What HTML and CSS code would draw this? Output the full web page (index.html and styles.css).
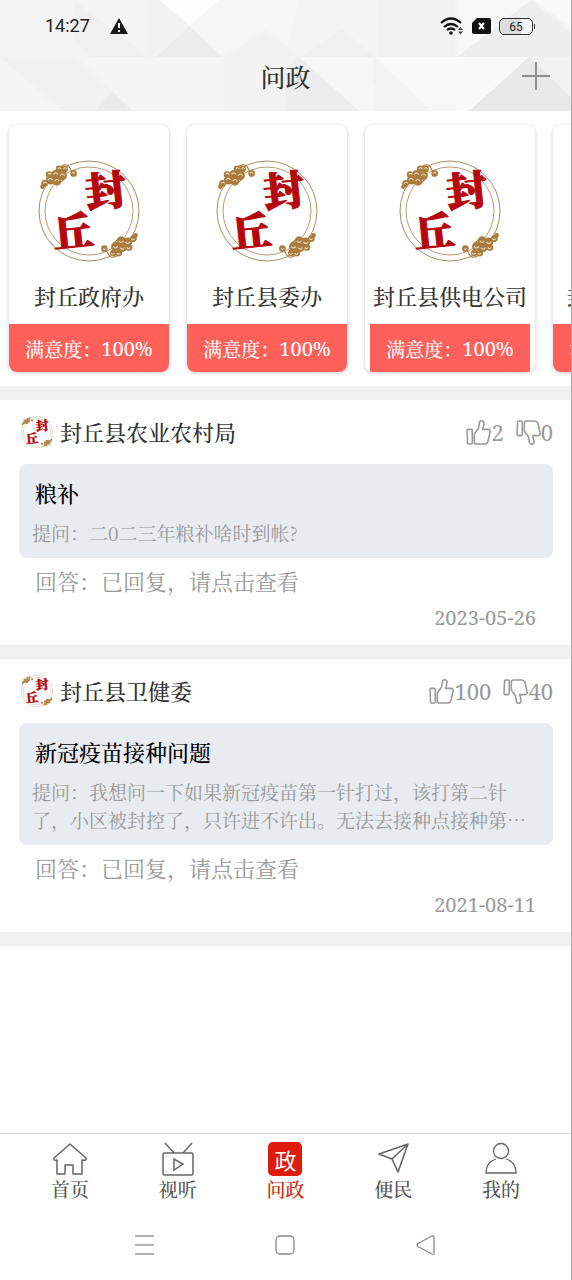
FILE: index.html
```html
<!DOCTYPE html>
<html lang="zh-CN">
<head>
<meta charset="utf-8">
<meta name="viewport" content="width=device-width, initial-scale=1">
<title>问政</title>
<link rel="stylesheet" href="styles.css">
</head>
<body>
<svg class="defs" aria-hidden="true">
  <symbol id="cloud" viewBox="0 0 34 26">
    <g fill="#aa7c3e">
      <circle cx="5" cy="21" r="3"/><circle cx="10" cy="18" r="4"/><circle cx="16" cy="19" r="4"/><circle cx="9" cy="13" r="3"/><circle cx="15" cy="13" r="4"/><circle cx="21" cy="14" r="4"/><circle cx="18" cy="8" r="3"/><circle cx="23" cy="8" r="3"/><circle cx="31" cy="12" r="3"/><circle cx="3" cy="24" r="2"/>
    </g>
    <path d="M19 6q7-5 10 4M4 21q5-4 10 0M9 14q5-3 8 3M17 10q4-3 7 2M12 21q8 1 12-6" fill="none" stroke="#aa7c3e" stroke-width="1"/>
    <path d="M4 21q1-2 3 0M8 18q2-3 4 0M14 19q2-3 4 0M8 13q1-2 3 0M13 13q2-3 4 0M19 14q2-3 4 0M17 8q1-2 3 0M22 8q1-2 3 0M30 12q1-2 2 0" fill="none" stroke="#ead9b8" stroke-width="1"/>
  </symbol>
  <symbol id="logo" viewBox="0 0 102 102">
    <circle cx="51" cy="51" r="50" fill="none" stroke="#a98c60" stroke-width="1"/>
    <circle cx="51" cy="51" r="44" fill="none" stroke="#b59b73" stroke-width="1"/>
    <use href="#cloud" x="0" y="0" width="40" height="29"/>
    <use href="#cloud" x="0" y="0" width="40" height="29" transform="rotate(180 51 51)"/>
    <g class="logo-text">
      <text x="47" y="46" transform="rotate(-6 67 31)">封</text>
      <text x="14" y="87" transform="rotate(-6 36 70)">丘</text>
    </g>
  </symbol>
  <symbol id="up" viewBox="0 0 24 24">
    <path d="M1 10q0-1 1-1h3q1 0 1 1v12q0 1-1 1H2.500q-1 0-1-1zM9 12l3-4 1-6q1-2 3-1 2 1 1 4l-1 4h5q3 0 2 3l-2 9q-1 2-3 2h-8q-2 0-2-2v-7q0-1 1-2z" fill="none" stroke="currentColor" stroke-width="1.500" stroke-linejoin="round"/>
  </symbol>
</svg>

<header class="top">
  <svg class="facets" viewBox="0 0 572 111" preserveAspectRatio="none" aria-hidden="true">
    <path fill="#f4f4f4" d="M0 0h572v111H0z"/>
    <path fill="#f0f0f0" d="M74 0l74 57H92L74 40z"/>
    <path fill="#f2f2f2" d="M148 0h12l30 26-38 31h-4z"/>
    <path fill="#fdfdfd" d="M160 0h60l-30 26z"/>
    <path fill="#ededed" d="M190 26l33 31h-67z"/>
    <path fill="#f6f6f6" d="M220 0h80l-14 57h-63l-33-31z"/>
    <path fill="#f1f1f1" d="M0 57h76l36 34-14 20H38z"/>
    <path fill="#f5f5f5" d="M0 57l62 54H0zM76 57h72l-36 34z"/>
    <path fill="#ebebeb" d="M112 91l22 20H96z"/>
    <path fill="#f5f5f5" d="M152 57h72v54h-90l-22-20z"/>
    <path fill="#f2f2f2" d="M224 57l42-27 34 27 60 54H224z"/>
    <path fill="#ededed" d="M300 57l60 54h-74V70z"/>
    <path fill="#f0f0f0" d="M300 57l42-28 34 28v28z"/>
    <path fill="#f7f7f7" d="M300 57h74v54h-14z"/>
    <path fill="#f1f1f1" d="M380 0h76v57h-76z"/>
    <path fill="#f8f8f8" d="M376 57h80v54h-24zM460 0h72l-74 57z"/>
    <path fill="#eeeeee" d="M532 0l40 33v24H458z"/>
    <path fill="#fafafa" d="M536 0h36v28zM456 57h74l-60 54h-14z"/>
    <path fill="#e9e9e9" d="M530 57l42 40v14H470z"/>
    <path fill="#f2f2f2" d="M530 57h42v40z"/>
  </svg>
  <div class="status">
    <time>14:27</time>
    <svg width="18" height="16" viewBox="0 0 18 16" aria-hidden="true"><path d="M9 0l9 16H0z" fill="#1a1a1a"/><path d="M9 5v5M9 12v2" stroke="#f2f2f2" stroke-width="2"/></svg>
    <div class="status-right">
      <svg width="24" height="18" viewBox="0 0 24 18" aria-hidden="true"><g fill="none" stroke="#111" stroke-width="2.200"><path d="M1 6q10-9 20 0M4 10q7-6 14 0M7 13q4-3 8 0"/></g><circle cx="11" cy="16" r="1.800" fill="#111"/><path d="M18 13l2.500-3 2.500 3zM18 14.500h5L20.500 17.500z" fill="#444"/></svg>
      <svg width="19" height="16" viewBox="0 0 19 16" aria-hidden="true"><path d="M5 0h12q2 0 2 2v12q0 2-2 2H2q-2 0-2-2V5z" fill="#111"/><path d="M7 5l5 6M12 5l-5 6" stroke="#fff" stroke-width="2"/></svg>
      <span class="battery">65</span>
    </div>
  </div>
  <div class="title-row">
    <h1>问政</h1>
    <button class="add" aria-label="添加"><svg width="28" height="28" viewBox="0 0 28 28"><path d="M14 0v28M0 14h28" stroke="#909090" stroke-width="2"/></svg></button>
  </div>
</header>

<main>
  <section class="cards" aria-label="部门">
    <a class="card" href="#"><svg class="logo"><use href="#logo"/></svg><span class="card-name">封丘政府办</span><span class="rate">满意度：<span class="percent">100%</span></span></a>
    <a class="card" href="#"><svg class="logo"><use href="#logo"/></svg><span class="card-name">封丘县委办</span><span class="rate">满意度：<span class="percent">100%</span></span></a>
    <a class="card wide" href="#"><svg class="logo"><use href="#logo"/></svg><span class="card-name">封丘县供电公司</span><span class="rate">满意度：<span class="percent">100%</span></span></a>
    <a class="card" href="#"><svg class="logo"><use href="#logo"/></svg><span class="card-name">封丘县住建局</span><span class="rate">满意度：<span class="percent">100%</span></span></a>
  </section>

  <article class="post">
    <div class="post-head">
      <svg class="avatar"><use href="#logo"/></svg><h2>封丘县农业农村局</h2>
      <button class="vote" aria-label="赞 2"><svg class="thumb"><use href="#up"/></svg>2</button>
      <button class="vote" aria-label="踩 0"><svg class="thumb down"><use href="#up"/></svg>0</button>
    </div>
    <div class="question"><h3>粮补</h3><p>提问：二0二三年粮补啥时到帐?</p></div>
    <p class="answer">回答：已回复，请点击查看</p>
    <time class="date">2023-05-26</time>
  </article>

  <article class="post">
    <div class="post-head">
      <svg class="avatar"><use href="#logo"/></svg><h2>封丘县卫健委</h2>
      <button class="vote" aria-label="赞 100"><svg class="thumb"><use href="#up"/></svg>100</button>
      <button class="vote" aria-label="踩 40"><svg class="thumb down"><use href="#up"/></svg>40</button>
    </div>
    <div class="question"><h3>新冠疫苗接种问题</h3><p>提问：我想问一下如果新冠疫苗第一针打过，该打第二针了，小区被封控了，只许进不许出。无法去接种点接种第…</p></div>
    <p class="answer">回答：已回复，请点击查看</p>
    <time class="date">2021-08-11</time>
  </article>
</main>

<nav class="tabs">
  <a href="#"><svg width="36" height="34" viewBox="0 0 36 34"><path d="M18 2L2 16q-1 3 3 2v14h8V23h8v9h9V18q5 1 4-2z" fill="none" stroke="#666" stroke-width="1.500" stroke-linejoin="round"/></svg>首页</a>
  <a href="#"><svg width="36" height="34" viewBox="0 0 36 34"><g fill="none" stroke="#666" stroke-width="1.500"><rect x="3" y="11" width="30" height="22" rx="2"/><path d="M5 1l9 10M32 1l-9 10M14 17v11l9-6z"/></g></svg>视听</a>
  <a href="#" class="active" aria-current="page"><span class="zheng" aria-hidden="true">政</span>问政</a>
  <a href="#"><svg width="36" height="34" viewBox="0 0 36 34"><path d="M33 2L4 12l13 5 6 13zM33 2L17 17" fill="none" stroke="#666" stroke-width="1.600" stroke-linejoin="round"/></svg>便民</a>
  <a href="#"><svg width="36" height="34" viewBox="0 0 36 34"><g fill="none" stroke="#666" stroke-width="1.300"><circle cx="18" cy="9" r="7.500"/><path d="M13 17Q3 20 3 31h30q0-11-10-14"/></g></svg>我的</a>
</nav>
<div class="system">
  <button aria-label="最近任务"><svg width="22" height="22" viewBox="0 0 22 22"><path d="M1 2h19M1 11h19M1 20h19" stroke="#999" stroke-width="1.500"/></svg></button>
  <button aria-label="主屏幕"><svg width="22" height="22" viewBox="0 0 22 22"><rect x="2" y="2" width="18" height="18" rx="4" fill="none" stroke="#888" stroke-width="1.300"/></svg></button>
  <button aria-label="返回"><svg width="22" height="22" viewBox="0 0 22 22"><path d="M3 9.500L17 2q2-1 2 1v16q0 2-2 1L3 12.500q-2-1.500 0-3z" fill="none" stroke="#888" stroke-width="1.300"/></svg></button>
</div>
</body>
</html>
```
FILE: styles.css
```css
* { box-sizing: border-box; }
body {
  margin: 0;
  min-height: 100vh;
  display: flex;
  flex-direction: column;
  overflow-x: hidden;
  background: #fefefe;
  border-right: 1px solid #aaa;
  color: #333;
  font-family: "Noto Serif CJK SC", "Source Han Serif SC", "Liberation Serif", "Noto Sans CJK SC", serif;
}
h1, h2, h3, p { margin: 0; font-weight: 500; }
a { color: inherit; text-decoration: none; }
button { padding: 0; border: 0; background: none; color: inherit; font: inherit; display: flex; align-items: center; }
svg { display: block; flex: none; }
.defs { position: absolute; width: 0; height: 0; }

.top { position: relative; height: 111px; }
.facets { position: absolute; inset: 0; width: 100%; height: 100%; z-index: -1; }
.status {
  display: flex;
  align-items: center;
  gap: 20px;
  height: 52px;
  padding: 0 38px 0 45px;
  color: #222;
  font: 18px/24px Roboto, sans-serif;
}
.status-right { display: flex; align-items: center; gap: 8px; margin-left: auto; }
.battery {
  position: relative;
  width: 34px;
  height: 17px;
  border: 1px solid #333;
  border-radius: 5px;
  background: linear-gradient(90deg, #ddd 65%, #f4f4f4 65%);
  font-size: 12px;
  line-height: 16px;
  text-align: center;
}
.battery::after {
  content: "";
  position: absolute;
  right: -3px;
  top: 5px;
  width: 1px;
  height: 5px;
  background: #333;
}
.title-row { display: grid; grid-template-columns: 1fr auto 1fr; align-items: center; height: 48px; padding: 0 21px; }
.title-row h1 { grid-column: 2; font-size: 25px; line-height: 36px; }
.add { justify-self: end; }

.cards { display: flex; gap: 18px; padding: 14px 9px; overflow: hidden; }
.card {
  flex: none;
  display: flex;
  flex-direction: column;
  align-items: center;
  min-width: 160px;
  padding-top: 35px;
  border-radius: 8px;
  overflow: hidden;
  background: #fff;
  box-shadow: 0 1px 4px #0003;
}
.wide { min-width: 170px; }
.logo { width: 102px; height: 102px; }
.logo-text { fill: #b5070d; stroke: #b5070d; stroke-width: 1px; font: 900 41px "Noto Serif CJK SC", "Noto Sans CJK SC", serif; }
.card-name { margin: 18px 0 12px; font-size: 22px; line-height: 32px; font-weight: 500; }
.rate {
  display: flex;
  align-items: center;
  justify-content: center;
  width: 160px;
  height: 48px;
  background: #ff6059;
  color: #fff;
  font-size: 19px;
  font-weight: 500;
}
.percent, .vote, .date { font-family: "Noto Serif", "Noto Serif CJK SC", "Liberation Serif", serif; font-weight: 400; }
.percent { font-size: 20px; }

.post { padding: 0 18px 13px 19px; border-top: 14px solid #f0f0f0; }
.post:last-child { border-bottom: 14px solid #f0f0f0; }
.post-head { display: flex; align-items: center; height: 64px; padding-left: 2px; color: #999; }
.avatar { width: 32px; height: 32px; margin-right: 7px; }
.post-head h2 { flex: 1; font-size: 22px; line-height: 32px; color: #333; }
.vote { margin-left: 12px; font-size: 22px; line-height: 32px; }
.thumb { width: 25px; height: 25px; }
.down { transform: scaleY(-1); }
.question { padding: 14px 13px 11px; border-radius: 8px; background: #e8ecf1; }
.question h3 { margin: 0 3px 11px; color: #000; font-size: 22px; line-height: 30px; font-weight: 500; }
.question p { color: #999; font-size: 19px; line-height: 28px; font-weight: 400; }
.answer { margin: 7px 16px; color: #999; font-size: 22px; line-height: 32px; font-weight: 400; }
.date { display: block; padding-right: 17px; color: #999; font-size: 20px; line-height: 28px; text-align: right; }

.tabs {
  display: grid;
  grid-template-columns: repeat(5, 1fr);
  margin-top: auto;
  padding: 8px 16px 0;
  border-top: 1px solid #d4d9dc;
}
.tabs a { display: flex; flex-direction: column; align-items: center; font-size: 19px; line-height: 26px; font-weight: 500; color: #555; }
.tabs .active { color: #d71b0e; }
.zheng {
  width: 34px;
  height: 34px;
  border-radius: 5px;
  background: #df1b0b;
  color: #fff;
  font: 22px/34px "Noto Sans CJK SC", sans-serif;
  text-align: center;
}
.system { display: grid; grid-template-columns: repeat(3, 1fr); height: 78px; padding: 8px 75px 0; align-items: center; justify-items: center; }
```
